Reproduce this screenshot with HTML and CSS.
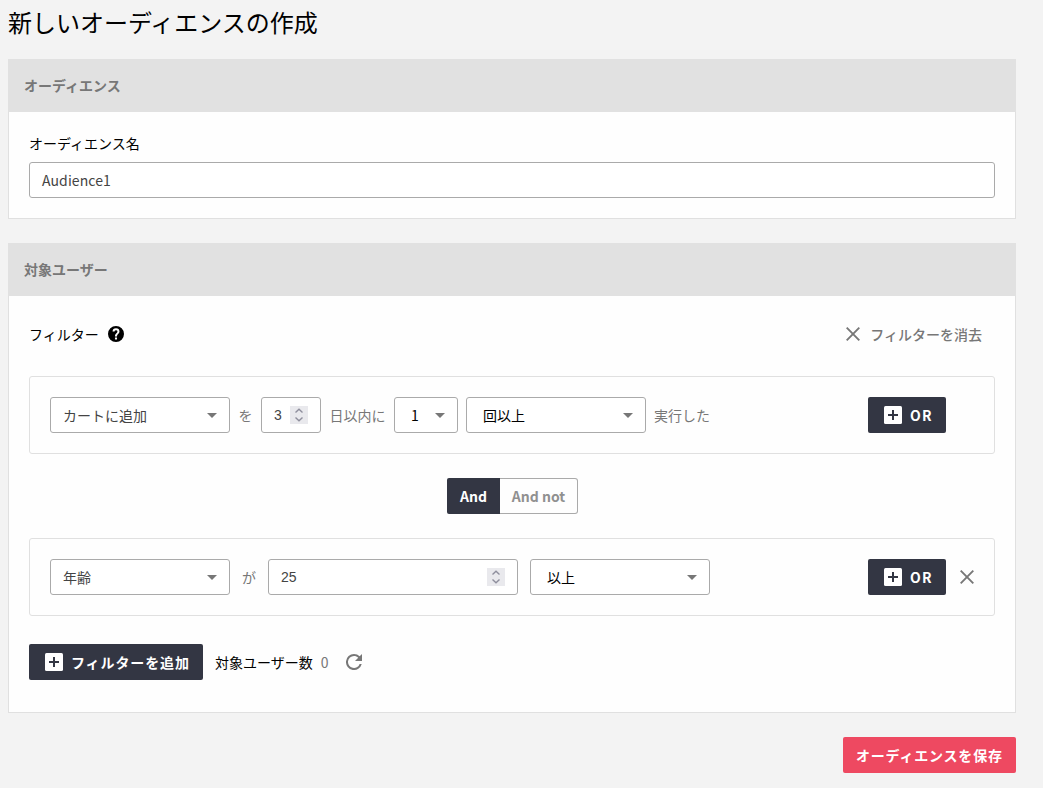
FILE: index.html
```html
<!DOCTYPE html>
<html lang="ja">
<head>
<meta charset="utf-8">
<title>新しいオーディエンスの作成</title>
<link rel="stylesheet" href="styles.css">
</head>
<body>
<svg class="defs" aria-hidden="true">
  <symbol id="plus" viewBox="0 0 18 18"><rect width="18" height="18" rx="1.5" fill="#fff"/><path d="M9 4v10M4 9h10" stroke="#333643" stroke-width="2"/></symbol>
  <symbol id="close" viewBox="0 0 14 14"><path d="M.7.7l12.6 12.6M13.3.7L.7 13.3" stroke="#777" stroke-width="1.9" fill="none"/></symbol>
  <symbol id="caret" viewBox="0 0 10 5"><path d="M0 0h10L5 5z" fill="#777"/></symbol>
  <symbol id="spin" viewBox="0 0 18 18"><path d="M0 0h18v18H0z" fill="#e9e9ed"/><path d="M5.5 6.6L9 3.3l3.5 3.3M5.5 11.4L9 14.7l3.5-3.3" stroke="#8f8f9d" stroke-width="1.4" fill="none"/></symbol>
</svg>
<main class="page">
  <h1 class="title">新しいオーディエンスの作成</h1>
  <section class="panel">
    <h2 class="panel-head">オーディエンス</h2>
    <div class="panel-body name-body">
      <div class="label">オーディエンス名</div>
      <div class="control name-input">Audience1</div>
    </div>
  </section>
  <section class="panel">
    <h2 class="panel-head">対象ユーザー</h2>
    <div class="panel-body filter-body">
      <div class="filter-head">
        <span>フィルター</span>
        <svg class="help" viewBox="2 2 20 20"><path d="M12 2a10 10 0 100 20 10 10 0 000-20zm1.3 17h-2.6v-2.6h2.6zm2.2-7.8l-.9.9c-.8.8-1.3 1.4-1.3 3h-2.6v-.6c0-1.1.5-2.1 1.2-2.8l1.3-1.3c.4-.4.6-.8.6-1.4a1.8 1.8 0 00-3.6 0H7.7a4.3 4.3 0 018.6 0c0 .9-.3 1.7-.8 2.2z"/></svg>
        <span class="clear"><svg class="x"><use href="#close"/></svg>フィルターを消去</span>
      </div>
      <div class="rule rule-event">
        <div class="control select wide"><span>カートに追加</span><svg class="caret"><use href="#caret"/></svg></div>
        <span class="word between">を</span>
        <div class="control number days"><span>3</span><svg class="spin"><use href="#spin"/></svg></div>
        <span class="word between">日以内に</span>
        <div class="control select count inset dark"><span>1</span><svg class="caret"><use href="#caret"/></svg></div>
        <div class="control select wide inset dark"><span>回以上</span><svg class="caret"><use href="#caret"/></svg></div>
        <span class="word">実行した</span>
        <div class="rule-actions"><button class="btn or"><svg class="plus"><use href="#plus"/></svg>OR</button></div>
      </div>
      <div class="joiner"><span class="join on">And</span><span class="join off">And not</span></div>
      <div class="rule rule-attr">
        <div class="control select wide"><span>年齢</span><svg class="caret"><use href="#caret"/></svg></div>
        <span class="word">が</span>
        <div class="control number value"><span>25</span><svg class="spin"><use href="#spin"/></svg></div>
        <div class="control select wide inset dark"><span>以上</span><svg class="caret"><use href="#caret"/></svg></div>
        <div class="rule-actions"><button class="btn or"><svg class="plus"><use href="#plus"/></svg>OR</button><svg class="x"><use href="#close"/></svg></div>
      </div>
      <div class="filter-foot">
        <button class="btn add"><svg class="plus"><use href="#plus"/></svg>フィルターを追加</button>
        <span class="total">対象ユーザー数</span><span class="total-num">0</span>
        <svg class="reload" viewBox="4 4 16 16"><path d="M17.65 6.35A7.96 7.96 0 0012 4a8 8 0 107.73 10h-2.08A6 6 0 1112 6c1.66 0 3.14.69 4.22 1.78L13 11h7V4z" fill="#777"/></svg>
      </div>
    </div>
  </section>
  <div class="save-row"><button class="btn save">オーディエンスを保存</button></div>
</main>
</body>
</html>
```
FILE: styles.css
```css
* { box-sizing: border-box; }
body { margin: 0; background: #f3f3f3; color: #000; font: 14px/20px "Noto Sans CJK JP", sans-serif; }
svg { display: block; flex: none; }
.defs { position: absolute; width: 0; height: 0; }
.page { width: 1016px; padding-left: 8px; }
.title { margin: 0; height: 59px; padding-top: 4px; font-size: 24px; line-height: 36px; font-weight: 400; }
.panel { margin-bottom: 24px; background: #fefefe; border: 1px solid #e0e0e0; border-top: 0; }
.panel-head { margin: 0 -1px; height: 53px; padding: 16px 16px 0; background: #e1e1e1; color: #777; font-size: 14px; line-height: 20px; font-weight: 700; }
.panel-body { padding: 0 20px; }
.name-body { height: 106px; padding-top: 21px; }
.label { margin-bottom: 9px; }
.control { display: flex; align-items: center; height: 36px; padding: 0 12px; border: 1px solid #aaa; border-radius: 3px; background: #fff; color: #444; }
.name-input { letter-spacing: .1px; }
.filter-body { height: 416px; }
.filter-head { display: flex; align-items: center; height: 80px; padding: 0 13px 4px 0; }
.help { width: 16px; height: 16px; margin-left: 9px; }
.clear { display: flex; align-items: center; gap: 10px; margin-left: auto; color: #777; font-weight: 500; }
.x { width: 14px; height: 14px; }
.rule { display: flex; align-items: center; height: 78px; padding: 0 20px; border: 1px solid #e0e0e0; border-radius: 3px; }
.rule-event { gap: 8px; }
.rule-attr { gap: 12px; }
.select { justify-content: space-between; }
.wide { width: 180px; }
.inset { padding-left: 16px; }
.dark { color: #000; }
.count { width: 64px; }
.caret { width: 10px; height: 5px; }
.number { justify-content: space-between; font-family: "Liberation Sans", Arial, sans-serif; }
.days { width: 60px; }
.value { width: 250px; }
.spin { width: 18px; height: 18px; }
.word { color: #777; }
.between { margin: 0 .5px; }
.rule-actions { display: flex; align-items: center; gap: 14px; width: 106px; margin-left: auto; }
.btn { display: flex; align-items: center; height: 36px; padding: 0 0 0 16px; border: 0; border-radius: 2px; background: #333643; color: #fff; font: 700 14px/20px "Noto Sans CJK JP", sans-serif; letter-spacing: .9px; white-space: nowrap; }
.or { width: 78px; letter-spacing: 1.2px; }
.add { width: 174px; }
.plus { width: 18px; height: 18px; margin-right: 8px; }
.joiner { display: flex; justify-content: center; height: 84px; padding: 24px 0; font-weight: 700; }
.join { height: 36px; padding: 8px 0 8px 1px; text-align: center; }
.on { width: 53px; background: #333643; color: #fff; border-radius: 2px 0 0 2px; }
.off { width: 78px; padding-top: 7px; border: 1px solid #aaa; border-left: 0; border-radius: 0 3px 3px 0; color: #909090; }
.filter-foot { display: flex; align-items: center; padding-top: 28px; }
.total { margin-left: 12px; }
.total-num { margin-left: 8px; color: #777; }
.reload { width: 16px; height: 16px; margin-left: 17px; }
.save-row { display: flex; justify-content: flex-end; }
.save { width: 173px; padding: 0 0 0 13px; background: #ee4961; letter-spacing: .8px; }
```
